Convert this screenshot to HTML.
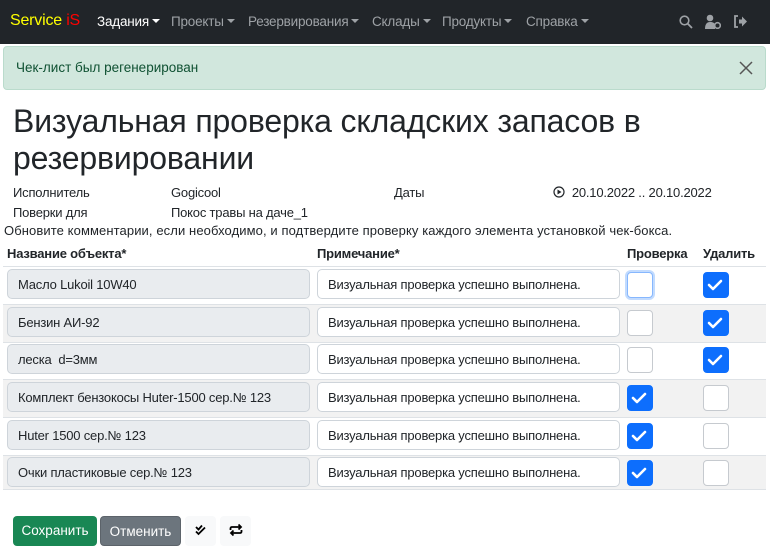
<!DOCTYPE html>
<html><head><meta charset="utf-8"><style>
*{box-sizing:border-box;margin:0;padding:0}
body{width:770px;height:552px;overflow:hidden;background:#fff;font-family:"Liberation Sans",sans-serif;color:#212529;font-size:13px;position:relative}
.nav{position:absolute;left:0;top:0;width:770px;height:44px;background:#212529}
.nav span{position:absolute;top:14px;font-size:13.5px;color:#9ea2a6;white-space:nowrap;letter-spacing:-0.2px}
.caret{display:inline-block;width:0;height:0;border-left:4px solid transparent;border-right:4px solid transparent;border-top:4px solid currentColor;vertical-align:3px;margin-left:3px}
.alert{position:absolute;left:3px;top:46px;width:763px;height:44px;background:#d1e7dd;border:1px solid #badbcc;border-radius:4px;color:#0f5132;font-size:13.5px;padding:13px 0 0 12px}
h1{position:absolute;left:13px;top:103px;font-size:32px;font-weight:500;line-height:37px;letter-spacing:-0.15px;white-space:nowrap}
.t{position:absolute;font-size:13px;white-space:nowrap;letter-spacing:-0.2px}
.inp{position:absolute;height:30px;border:1px solid #ced4da;border-radius:5px;font-size:13px;padding:7px 0 0 10px;white-space:nowrap;letter-spacing:-0.2px}
.g{background:#e9ecef}
.w{background:#fff}
.cb{position:absolute;width:26px;height:26px;border:1px solid #c6cacf;border-radius:4px;background:#fff}
.cb.on{background:#0d6efd;border-color:#0d6efd}
.row{position:absolute;left:3px;width:763px;border-bottom:1px solid #dee2e6}
.btn{position:absolute;top:516px;height:30px;border-radius:4px;color:#fff;font-size:13.5px;text-align:center;padding-top:7px}
</style></head><body>
<div class="nav">
<span style="left:10px;top:12px;font-size:16px;color:#ffff00">Service <b style="font-weight:normal;color:#ff0000">iS</b></span>
<span style="left:97px;color:#fff">Задания<i class="caret"></i></span>
<span style="left:171px">Проекты<i class="caret"></i></span>
<span style="left:248px">Резервирования<i class="caret"></i></span>
<span style="left:372px">Склады<i class="caret"></i></span>
<span style="left:442px">Продукты<i class="caret"></i></span>
<span style="left:526px">Справка<i class="caret"></i></span>
<svg style="position:absolute;left:679px;top:15px" width="14" height="14" viewBox="0 0 14 14"><circle cx="5.5" cy="5.5" r="4.3" fill="none" stroke="#9ea2a6" stroke-width="1.6"/><path d="M8.8 8.8L13 13" stroke="#9ea2a6" stroke-width="1.8"/></svg>
<svg style="position:absolute;left:705px;top:14px" width="16" height="15" viewBox="0 0 16 15"><circle cx="5" cy="4" r="3.3" fill="#9ea2a6"/><path d="M0 15c0-5 2-7 5-7s4 1 5 2v5z" fill="#9ea2a6"/><circle cx="12.5" cy="11.5" r="2.8" fill="none" stroke="#9ea2a6" stroke-width="1.6"/></svg>
<svg style="position:absolute;left:733px;top:15px" width="14" height="13" viewBox="0 0 14 13"><path d="M5 1H2v11h3" fill="none" stroke="#9ea2a6" stroke-width="1.8"/><path d="M6 4.5h3V1.5l5 5-5 5v-3H6z" fill="#9ea2a6"/></svg>
</div>
<div class="alert">Чек-лист был регенерирован
<svg style="position:absolute;right:12px;top:14px" width="14" height="14" viewBox="0 0 14 14"><path d="M1 1L13 13M13 1L1 13" stroke="#555" stroke-width="1.5"/></svg></div>
<h1>Визуальная проверка складских запасов в<br>резервировании</h1>
<div class="t" style="left:13px;top:185px">Исполнитель</div>
<div class="t" style="left:171px;top:185px">Gogicool</div>
<div class="t" style="left:394px;top:185px">Даты</div>
<div class="t" style="left:553px;top:185px"><svg width="12" height="12" viewBox="0 0 12 12" style="vertical-align:-1px"><circle cx="6" cy="6" r="5" fill="none" stroke="#212529" stroke-width="1.2"/><path d="M4.5 3.5L8.5 6 4.5 8.5z" fill="#212529"/></svg>&nbsp; 20.10.2022 .. 20.10.2022</div>
<div class="t" style="left:13px;top:205px">Поверки для</div>
<div class="t" style="left:171px;top:205px">Покос травы на даче_1</div>
<div class="t" style="left:4px;top:223px;letter-spacing:0.1px">Обновите комментарии, если необходимо, и подтвердите проверку каждого элемента установкой чек-бокса.</div>
<div class="row" style="top:242px;height:25px"></div>
<div class="t" style="left:7px;top:246px;font-weight:bold">Название объекта*</div>
<div class="t" style="left:317px;top:246px;font-weight:bold">Примечание*</div>
<div class="t" style="left:627px;top:246px;font-weight:bold">Проверка</div>
<div class="t" style="left:703px;top:246px;font-weight:bold">Удалить</div>

<div class="row" style="top:267px;height:38px"></div>
<div class="row" style="top:305px;height:38px;background:#f2f2f2"></div>
<div class="row" style="top:343px;height:37px"></div>
<div class="row" style="top:380px;height:38px;background:#f2f2f2"></div>
<div class="row" style="top:418px;height:38px"></div>
<div class="row" style="top:456px;height:34px;background:#f2f2f2"></div>

<div class="inp g" style="left:7px;top:269px;width:303px">Масло Lukoil 10W40</div>
<div class="inp g" style="left:7px;top:307px;width:303px">Бензин АИ-92</div>
<div class="inp g" style="left:7px;top:344px;width:303px">леска&nbsp; d=3мм</div>
<div class="inp g" style="left:7px;top:382px;width:303px">Комплект бензокосы Huter-1500 сер.№ 123</div>
<div class="inp g" style="left:7px;top:420px;width:303px">Huter 1500 сер.№ 123</div>
<div class="inp g" style="left:7px;top:457px;width:303px">Очки пластиковые сер.№ 123</div>

<div class="inp w" style="left:317px;top:269px;width:303px">Визуальная проверка успешно выполнена.</div>
<div class="inp w" style="left:317px;top:307px;width:303px">Визуальная проверка успешно выполнена.</div>
<div class="inp w" style="left:317px;top:344px;width:303px">Визуальная проверка успешно выполнена.</div>
<div class="inp w" style="left:317px;top:382px;width:303px">Визуальная проверка успешно выполнена.</div>
<div class="inp w" style="left:317px;top:420px;width:303px">Визуальная проверка успешно выполнена.</div>
<div class="inp w" style="left:317px;top:457px;width:303px">Визуальная проверка успешно выполнена.</div>

<div class="cb" style="left:627px;top:272px;border-color:#86b7fe;box-shadow:0 0 0 2px #c2dbfe"></div>
<div class="cb" style="left:627px;top:310px"></div>
<div class="cb" style="left:627px;top:347px"></div>
<div class="cb on" style="left:627px;top:385px"></div>
<div class="cb on" style="left:627px;top:423px"></div>
<div class="cb on" style="left:627px;top:460px"></div>
<div class="cb on" style="left:703px;top:272px"></div>
<div class="cb on" style="left:703px;top:310px"></div>
<div class="cb on" style="left:703px;top:347px"></div>
<div class="cb" style="left:703px;top:385px"></div>
<div class="cb" style="left:703px;top:423px"></div>
<div class="cb" style="left:703px;top:460px"></div>
<svg style="position:absolute;left:0;top:0" width="770" height="552">
<g fill="none" stroke="#fff" stroke-width="2.6" stroke-linecap="round" stroke-linejoin="round">
<path d="M709 285l4 4 8-8"/><path d="M709 323l4 4 8-8"/><path d="M709 360l4 4 8-8"/>
<path d="M633 398l4 4 8-8"/><path d="M633 436l4 4 8-8"/><path d="M633 473l4 4 8-8"/>
</g></svg>

<div class="btn" style="left:13px;width:84px;background:#198754">Сохранить</div>
<div class="btn" style="left:100px;width:81px;background:#6c757d;border:1px solid #5c636a">Отменить</div>
<div class="btn" style="left:185px;width:31px;background:#f8f9fa"><svg width="14" height="14" viewBox="0 0 14 14"><path d="M2 4l2.5 2.5L8 2.5M2 8.5l2.5 2.5L11 4.5" fill="none" stroke="#000" stroke-width="1.8"/></svg></div>
<div class="btn" style="left:220px;width:31px;background:#f8f9fa"><svg width="14" height="14" viewBox="0 0 14 14"><path d="M1.5 7V5.5Q1.5 4 3 4h8.5M9.5 1.5L12 4 9.5 6.5M12.5 7v1.5Q12.5 10 11 10H2.5M4.5 7.5L2 10l2.5 2.5" fill="none" stroke="#000" stroke-width="1.8"/></svg></div>
</body></html>
